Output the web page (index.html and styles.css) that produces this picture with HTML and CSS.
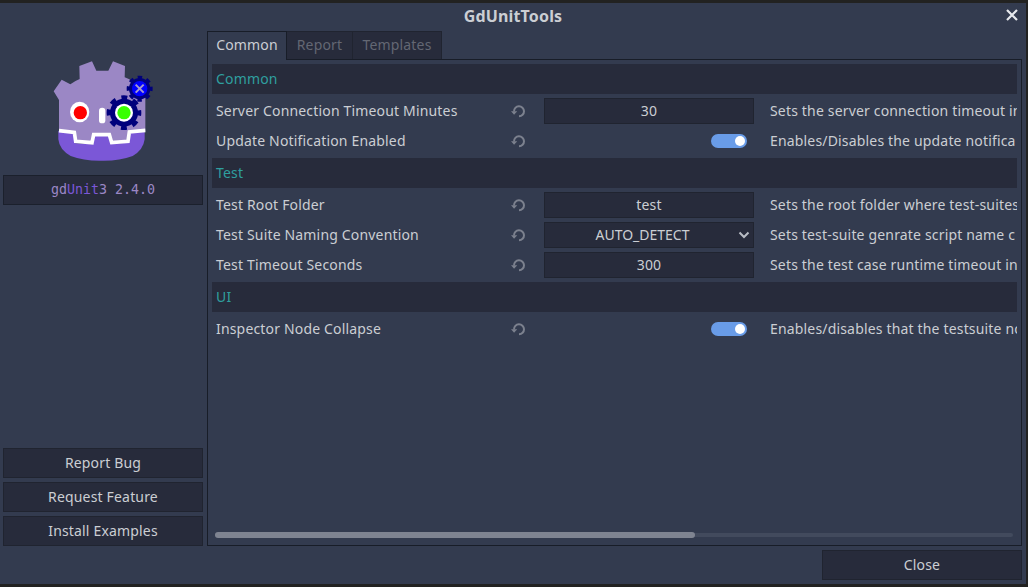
FILE: index.html
```html
<!DOCTYPE html>
<html lang="en">
<head>
<meta charset="utf-8">
<title>GdUnitTools</title>
<link rel="stylesheet" href="styles.css">
</head>
<body>
<svg class="defs" width="0" height="0" aria-hidden="true">
  <symbol id="reload" viewBox="0 0 16 16">
    <path d="M4 8.500A5 5 0 1 1 9 13.300" fill="none" stroke="currentColor" stroke-width="2"/>
    <path d="M1 8.300h6.200L4.100 11.700z" fill="currentColor"/>
  </symbol>
</svg>
<main class="dialog">
  <header class="titlebar">
    <h1 class="title">GdUnitTools</h1>
    <svg class="close-icon" viewBox="0 0 12 12"><path d="M1 1l10 10M11 1l-10 10"/></svg>
  </header>
  <div class="content">
    <aside class="sidebar">
      <svg class="logo" viewBox="0 0 375 360">
        <path fill="#9b87c5" d="M41 124L65 89L91 103Q104 93 119 87L118 48L156 34L169 62H205L219 34L255 48L254 82Q285 92 301 121L316 145V242L268 244L265 274L215 276L209 250L161 252L156 278L107 275L104 247L57 241V150Z"/>
        <path fill="#7b57d7" d="M55 242L103 248L106 280L159 283L164 256H206L213 281L267 278L271 249L314 244V268Q310 300 278 318Q238 333 185 332Q132 333 92 318Q58 299 55 268Z"/>
        <path fill="none" stroke="#fff" stroke-width="11" d="M57 242L103 247L107 274L156 278L161 254H208L215 278L264 274L268 246L316 241"/>
        <rect x="177" y="173" width="19" height="47" rx="9.500" fill="#fff"/>
        <ellipse cx="119" cy="186" rx="29" ry="31" fill="#fff"/>
        <circle cx="121" cy="188" r="20" fill="#f00"/>
        <g fill="#00007c">
          <circle cx="252" cy="188" r="42"/>
          <circle cx="252" cy="188" r="45" fill="none" stroke="#00007c" stroke-width="14" pathLength="80" stroke-dasharray="5 5" stroke-dashoffset="2.500"/>
          <circle cx="299" cy="116" r="32"/>
          <circle cx="299" cy="116" r="34" fill="none" stroke="#00007c" stroke-width="10" pathLength="80" stroke-dasharray="5 5" stroke-dashoffset="2.500"/>
        </g>
        <circle cx="252" cy="188" r="27" fill="#fff"/>
        <circle cx="252" cy="188" r="20" fill="#38ff00"/>
        <circle cx="299" cy="116" r="23" fill="#00f"/>
        <path d="M287 104l24 24M311 104l-24 24" stroke="#a79aca" stroke-width="6"/>
      </svg>
      <div class="version">gd<span class="accent">Unit</span>3 2.4.0</div>
      <nav class="links">
        <button class="btn">Report Bug</button>
        <button class="btn">Request Feature</button>
        <button class="btn">Install Examples</button>
      </nav>
    </aside>
    <section class="tabs-area">
      <div class="tabs">
        <div class="tab tab-active">Common</div>
        <div class="tab tab-report">Report</div>
        <div class="tab tab-templates">Templates</div>
      </div>
      <div class="panel">
        <div class="settings">
          <h2 class="group">Common</h2>
          <div class="row"><span class="name">Server Connection Timeout Minutes</span><svg class="reload"><use href="#reload"/></svg><span class="field">30</span><span class="desc">Sets the server connection timeout in</span></div>
          <div class="row"><span class="name">Update Notification Enabled</span><svg class="reload"><use href="#reload"/></svg><span class="switch-cell"><i class="switch"></i></span><span class="desc">Enables/Disables the update notifica</span></div>
          <h2 class="group">Test</h2>
          <div class="row"><span class="name">Test Root Folder</span><svg class="reload"><use href="#reload"/></svg><span class="field">test</span><span class="desc">Sets the root folder where test-suites</span></div>
          <div class="row"><span class="name">Test Suite Naming Convention</span><svg class="reload"><use href="#reload"/></svg><span class="field select"><span class="value">AUTO_DETECT</span><svg class="chevron" viewBox="0 0 12 8"><path d="M1.500 1.500L6 6l4.500-4.500"/></svg></span><span class="desc">Sets test-suite genrate script name c</span></div>
          <div class="row"><span class="name">Test Timeout Seconds</span><svg class="reload"><use href="#reload"/></svg><span class="field">300</span><span class="desc">Sets the test case runtime timeout in</span></div>
          <h2 class="group">UI</h2>
          <div class="row"><span class="name">Inspector Node Collapse</span><svg class="reload"><use href="#reload"/></svg><span class="switch-cell"><i class="switch"></i></span><span class="desc">Enables/disables that the testsuite no</span></div>
        </div>
        <div class="scrollbar"><div class="thumb"></div></div>
      </div>
    </section>
  </div>
  <footer class="footer"><button class="btn close-btn">Close</button></footer>
</main>
</body>
</html>
```
FILE: styles.css
```css
* { box-sizing: border-box; }
body {
  margin: 0;
  width: 1028px;
  height: 587px;
  padding: 3px 2px 3px 0;
  overflow: hidden;
  background: #222221;
  font: 14px/20px "Noto Sans", sans-serif;
  letter-spacing: 0.17px;
  color: #cbced3;
}
.defs { display: none; }
.dialog {
  height: 581px;
  display: flex;
  flex-direction: column;
  background: #333b4f;
}
.titlebar {
  height: 28px;
  display: grid;
  grid-template-columns: 1fr 20px;
  align-items: center;
}
.title {
  margin: 0 0 0 20px;
  padding-bottom: 3px;
  text-align: center;
  font-size: 16px;
  font-weight: 700;
  letter-spacing: 0.15px;
}
.close-icon {
  width: 12px;
  height: 12px;
  margin-bottom: 4px;
  fill: none;
  stroke: #e6e8ec;
  stroke-width: 2.2;
}
.content {
  height: 515px;
  display: flex;
  gap: 4px;
  padding: 0 4px 0 3px;
}
.sidebar {
  width: 200px;
  display: flex;
  flex-direction: column;
}
.logo {
  width: 125px;
  height: 120px;
  margin: 19px 0 5px 37px;
  flex: none;
}
.version {
  height: 30px;
  border: 1px solid #1b202c;
  background: #272b3b;
  text-align: center;
  font: 13.3px/27px "DejaVu Sans Mono", monospace;
  letter-spacing: 0;
  color: #9b87c5;
}
.accent { color: #7b57d7; }
.links {
  margin-top: auto;
  display: flex;
  flex-direction: column;
  gap: 4px;
}
.btn {
  height: 30px;
  padding: 0 0 1px;
  border: 1px solid #202430;
  background: #272b3b;
  color: inherit;
  font: inherit;
  letter-spacing: inherit;
}
.tabs-area {
  flex: 1;
  min-width: 0;
  display: flex;
  flex-direction: column;
}
.tabs { display: flex; height: 29px; }
.tab {
  height: 28px;
  padding-bottom: 1px;
  display: flex;
  align-items: center;
  justify-content: center;
  border: 1px solid #202430;
  border-left: 0;
  border-bottom: 0;
  background: #272b3b;
  color: #636773;
}
.tab-active {
  width: 80px;
  height: 29px;
  z-index: 1;
  margin-bottom: -1px;
  padding-bottom: 2px;
  border: 1px solid #181d28;
  border-bottom: 0;
  background: #333b4f;
  color: #cbced3;
}
.tab-report { width: 66px; }
.tab-templates { width: 89px; }
.panel {
  height: 487px;
  margin-top: -1px;
  padding: 4px 4px 0;
  border: 1px solid #181d28;
  display: flex;
  flex-direction: column;
}
.settings {
  display: flex;
  flex-direction: column;
  gap: 4px;
  width: 805px;
  overflow: hidden;
}
.group {
  height: 30px;
  margin: 0;
  padding: 5px 4px;
  background: #272b3b;
  color: #2f9f9f;
  font: inherit;
}
.row {
  flex: none;
  height: 26px;
  display: grid;
  grid-template-columns: 294px 34px 210px 1fr;
  align-items: center;
  padding-left: 4px;
}
.name, .desc { padding-bottom: 1px; white-space: nowrap; }
.desc { padding-left: 16px; }
.reload { width: 16px; height: 16px; color: #7c818e; }
.field {
  height: 26px;
  padding-bottom: 1px;
  display: flex;
  align-items: center;
  justify-content: center;
  border: 1px solid #202430;
  background: #272b3b;
}
.select { padding-right: 3px; }
.value { flex: 1; padding-left: 2px; text-align: center; letter-spacing: 0; }
.chevron {
  width: 12px;
  height: 8px;
  fill: none;
  stroke: #b8bcc4;
  stroke-width: 2;
}
.switch-cell { display: flex; justify-content: flex-end; padding-right: 7px; }
.switch {
  width: 36px;
  height: 14px;
  padding: 2px;
  border-radius: 7px;
  background: #699ce8;
}
.switch::after {
  content: "";
  display: block;
  width: 10px;
  height: 10px;
  margin-left: 22px;
  border-radius: 50%;
  background: #fff;
}
.scrollbar {
  width: 798px;
  height: 4px;
  margin: auto 0 8px 3px;
  border-radius: 2px;
  background: #424a5d;
}
.thumb {
  width: 480px;
  height: 6px;
  margin-top: -1px;
  border-radius: 3px;
  background: #7f8491;
}
.footer {
  display: flex;
  justify-content: flex-end;
  padding: 4px 4px 0;
}
.close-btn { width: 200px; }
```
